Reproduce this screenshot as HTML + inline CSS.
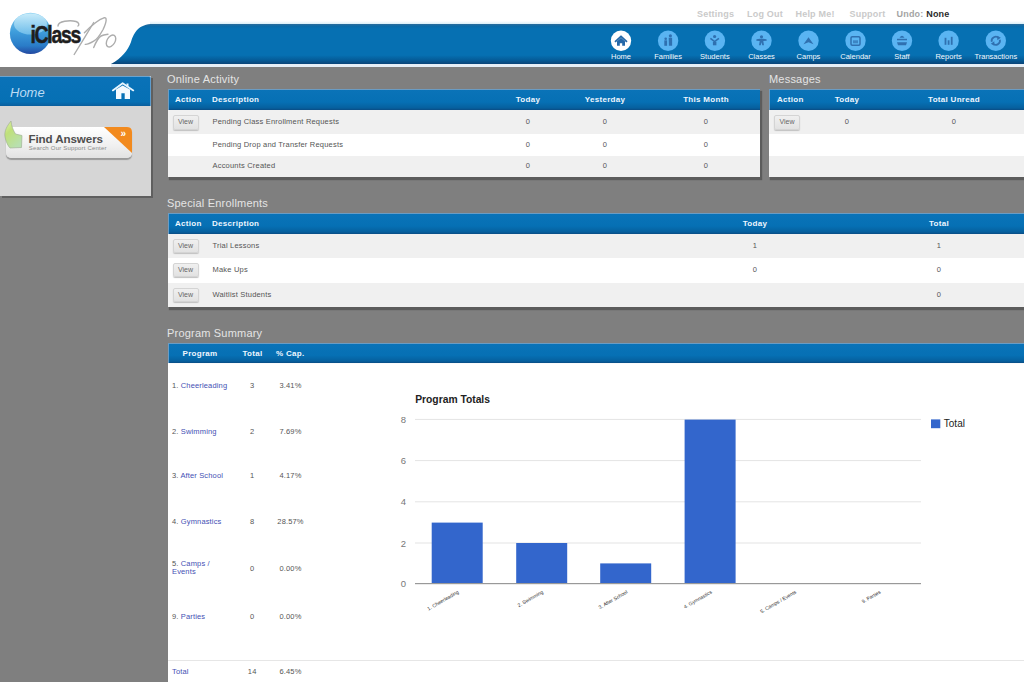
<!DOCTYPE html>
<html><head><meta charset="utf-8">
<style>
*{box-sizing:border-box;margin:0;padding:0}
html,body{width:1024px;height:682px;overflow:hidden}
body{position:relative;background:#7f7f7f;font-family:"Liberation Sans",sans-serif;}
.abs{position:absolute}
#top{left:0;top:0;width:1024px;height:67px;background:#fff}
.toplink{position:absolute;top:8.8px;font-size:9px;color:#cacaca;font-weight:bold;letter-spacing:0.2px}
.navl{position:absolute;top:52px;width:60px;text-align:center;font-size:7.5px;color:#f2f8fd}
.ptitle{position:absolute;font-size:11px;color:#e4e4e4;letter-spacing:0.2px}
.panel{position:absolute;background:#f0f0f0;box-shadow:1.5px 2.5px 1px 0.5px #5c5c5c}
.ph{position:absolute;left:0;right:0;top:0;height:21px;box-shadow:inset 1px 0 0 #6a9cc4,0 1px 0 #fafafa;background:linear-gradient(#0a73b8 0,#0670b4 60%,#06609e 90%,#0a4c84 100%);border-top:1px solid #6a9cc4}
.ph span{position:absolute;top:5px;font-size:8px;font-weight:bold;color:#eef6ff;letter-spacing:0.3px}
.row{position:absolute;left:0;right:0}
.row span{position:absolute;font-size:7.5px;color:#555;letter-spacing:0.2px}
.btn{position:absolute;width:26px;height:14.5px;background:linear-gradient(#f0f0f0,#e2e2e2);border:1px solid #d4d4d4;border-radius:2px;box-shadow:0 1px 1px #c0c0c0;font-size:7px;color:#666;text-align:center;line-height:12px}
.pl{position:absolute;font-size:7.5px;color:#555;letter-spacing:0.15px;white-space:nowrap}
.lk{color:#4450b4}
</style></head>
<body><div id="wrap" style="position:absolute;left:0;top:0;width:1024px;height:682px;overflow:hidden">
<div id="top" class="abs"></div>

<!-- blue nav bar -->
<svg class="abs" style="left:0;top:0" width="1024" height="70">
  <defs>
    <linearGradient id="bar" x1="0" y1="0" x2="0" y2="1">
      <stop offset="0" stop-color="#2a6c9c"/>
      <stop offset="0.06" stop-color="#0a6aa8"/>
      <stop offset="0.12" stop-color="#0670b2"/>
      <stop offset="0.78" stop-color="#0670b2"/>
      <stop offset="0.9" stop-color="#055c98"/>
      <stop offset="1" stop-color="#0a4478"/>
    </linearGradient>
    <linearGradient id="halo" x1="0" y1="0" x2="0" y2="1">
      <stop offset="0" stop-color="#ffffff"/>
      <stop offset="1" stop-color="#d8eef8"/>
    </linearGradient>
  </defs>
  <rect x="150" y="21" width="874" height="3" fill="url(#halo)"/><rect x="111" y="64" width="913" height="3" fill="#e6eef6"/><path d="M111 64 C 122 58, 128 50, 131 42 C 134 32, 139 24, 153 24 L1024 24 L1024 64 Z" fill="url(#bar)"/>
</svg>


<!-- logo -->
<svg class="abs" style="left:0;top:0" width="130" height="64">
  <defs>
    <linearGradient id="orb" x1="0" y1="0" x2="0" y2="1">
      <stop offset="0" stop-color="#8fd2f2"/>
      <stop offset="0.45" stop-color="#3f9edc"/>
      <stop offset="0.8" stop-color="#2a7cc8"/>
      <stop offset="1" stop-color="#2348a0"/>
    </linearGradient>
    <linearGradient id="orbh" x1="0" y1="0" x2="0" y2="1">
      <stop offset="0" stop-color="#d6f2fc"/>
      <stop offset="1" stop-color="#7cc6ee"/>
    </linearGradient>
  </defs>
  <circle cx="30.5" cy="33.4" r="20.6" fill="url(#orb)"/><ellipse cx="30.5" cy="24" rx="16.5" ry="10.5" fill="url(#orbh)" opacity="0.8"/>
  <g fill="none" stroke="#adadad" stroke-width="1.4" stroke-linecap="round">
    <path d="M58 26 C 58 21, 70 20, 76 21.5 C 79 22.5, 79.5 25, 78 26"/>
    <path d="M74.2 54.5 C 80 45, 88 32, 93.7 22.5"/>
    <path d="M84.4 32.7 C 88 29, 97 20, 103.9 17.8 C 107 17, 107 21, 103.1 29.5 C 100 35, 96 40, 93.7 41.2 C 90 43.5, 87 44.5, 85.2 44.4"/>
    <path d="M93.7 47.5 C 96 42, 99 37, 101 36 C 103 35, 106 34.5, 108 34.2"/>
    <ellipse cx="111" cy="41" rx="4" ry="6.5" transform="rotate(30 111 41)"/>
  </g>
  <text x="30.5" y="42.5" font-family="Liberation Sans" font-weight="bold" font-size="24" fill="#1e1e1e" stroke="#1e1e1e" stroke-width="0.5" letter-spacing="-1.6" textLength="49.5" lengthAdjust="spacingAndGlyphs">iClass</text>
</svg>

<!-- top links -->
<div class="toplink" style="left:697px">Settings</div>
<div class="toplink" style="left:747px">Log Out</div>
<div class="toplink" style="left:795.5px">Help Me!</div>
<div class="toplink" style="left:849.5px">Support</div>
<div class="toplink" style="left:896.5px;color:#a4a4a4">Undo: <span style="color:#2a2a2a">None</span></div>

<svg class="abs" style="left:0;top:0" width="1024" height="66">
<g transform="translate(621 40.8)"><circle r="10.2" fill="#ffffff"/><path d="M-6 1 L0 -4.5 L6 1" fill="none" stroke="#2468a8" stroke-width="1.8" stroke-linejoin="round"/><path d="M-4 0.5 L0 -3 L4 0.5 L4 5 L1.2 5 L1.2 2.5 L-1.2 2.5 L-1.2 5 L-4 5 Z" fill="#2468a8"/></g>
<g transform="translate(668.1 40.8)"><circle r="10.2" fill="#5ab4f2"/><circle cx="2.3" cy="-5" r="1.6" fill="#2f70b0"/><path d="M0.6 -3 L4 -3 L4 5 L0.8 5 Z" fill="#2f70b0"/><circle cx="-2.4" cy="-2" r="1.3" fill="#2f70b0"/><path d="M-3.8 -0.5 L-1 -0.5 L-1 5 L-3.8 5 Z" fill="#2f70b0"/></g>
<g transform="translate(714.9 40.8)"><circle r="10.2" fill="#5ab4f2"/><circle cx="-0.3" cy="-4.3" r="1.6" fill="#2f70b0"/><path d="M-4.5 -2.5 L-0.3 0.8 L4 -2.5" fill="none" stroke="#2f70b0" stroke-width="1.6"/><path d="M-2 1 L1.5 1 L1.5 4.5 L-2 4.5 Z" fill="#2f70b0"/></g>
<g transform="translate(761.5 40.8)"><circle r="10.2" fill="#5ab4f2"/><circle cx="0" cy="-4" r="1.6" fill="#2f70b0"/><path d="M-5 -1.5 L-1.5 -2 L1.5 -2 L5 -1.5 L5.2 0 L1.8 0.2 L2.5 4.5 L0.8 4.5 L0 1.5 L-0.8 4.5 L-2.5 4.5 L-1.8 0.2 L-5.2 0 Z" fill="#2f70b0"/></g>
<g transform="translate(808.5 40.8)"><circle r="10.2" fill="#5ab4f2"/><path d="M-5 3.5 L0 -3.5 L5 3.5 L0 1.5 Z" fill="#2f70b0"/></g>
<g transform="translate(855.5 40.8)"><circle r="10.2" fill="#5ab4f2"/><rect x="-4.5" y="-4" width="9" height="8.5" rx="1.2" fill="none" stroke="#2f70b0" stroke-width="1.5"/><rect x="-2.5" y="-0.5" width="5" height="3" fill="#2f70b0" opacity="0.7"/></g>
<g transform="translate(902 40.8)"><circle r="10.2" fill="#5ab4f2"/><path d="M-2.5 -3 Q0 -7 2.5 -3 Z" fill="#2f70b0"/><rect x="-5" y="-2" width="10" height="1.5" fill="#2f70b0"/><path d="M-5 1.5 L5 1.5 L4 4.5 L-4 4.5 Z" fill="#2f70b0"/></g>
<g transform="translate(948.6 40.8)"><circle r="10.2" fill="#5ab4f2"/><rect x="-4" y="-3" width="1.8" height="7" fill="#2f70b0"/><rect x="-0.9" y="-0.5" width="1.8" height="4.5" fill="#2f70b0"/><rect x="2.2" y="-4" width="1.8" height="8" fill="#2f70b0"/></g>
<g transform="translate(995.8 40.8)"><circle r="10.2" fill="#5ab4f2"/><path d="M-4 1 A4 4 0 0 1 3 -2.5" fill="none" stroke="#2f70b0" stroke-width="1.8"/><path d="M4 -1 A4 4 0 0 1 -3 2.5" fill="none" stroke="#2f70b0" stroke-width="1.8"/><path d="M1.5 -5 L5 -3 L1.5 -0.5 Z" fill="#2f70b0"/><path d="M-1.5 5 L-5 3 L-1.5 0.5 Z" fill="#2f70b0"/></g>
</svg>
<div class="navl" style="left:591.0px">Home</div>
<div class="navl" style="left:638.1px">Families</div>
<div class="navl" style="left:684.9px">Students</div>
<div class="navl" style="left:731.5px">Classes</div>
<div class="navl" style="left:778.5px">Camps</div>
<div class="navl" style="left:825.5px">Calendar</div>
<div class="navl" style="left:872.0px">Staff</div>
<div class="navl" style="left:918.6px">Reports</div>
<div class="navl" style="left:965.8px">Transactions</div>
<!-- side panel -->
<div class="abs" style="left:0;top:75.5px;width:151px;height:120px;background:#d6d6d6;box-shadow:2px 2px 0 #5f5f5f"></div>
<div class="abs" style="left:0;top:75.5px;width:151px;height:30.5px;background:linear-gradient(#0a72b8,#0670b4 85%,#0a5f9e);border-top:1px solid #6aa4d0;border-right:1px solid #5e9ccc;border-top-right-radius:2px"></div>
<div class="abs" style="left:10px;top:84.5px;font-size:13px;font-style:italic;color:#bcdcf4">Home</div>
<svg class="abs" style="left:105px;top:76px" width="36" height="28" viewBox="105 76 36 28">
  <path d="M112.8 90.4 L122.65 83.2 L133.3 90.4" fill="none" stroke="#e8f6ff" stroke-width="1.8" stroke-linecap="round" stroke-linejoin="round"/>
  <path d="M126.5 85.5 L126.5 83.5 L128.5 83.5 L128.5 87" fill="#e8f6ff"/>
  <path d="M116 89.5 L122.65 85.6 L130 89.5 L130 99 L124.7 99 L124.7 93.2 L121.4 93.2 L121.4 99 L116 99 Z" fill="#f6fbff"/>
</svg>

<!-- find answers -->
<div class="abs" style="left:5.5px;top:126.5px;width:126.5px;height:31px;border-radius:5px;background:linear-gradient(#ffffff,#f0f0f0 60%,#e2e2e2);box-shadow:0 2px 1px #9a9a9a"></div>
<svg class="abs" style="left:104px;top:126.5px" width="28" height="26" viewBox="0 0 28 26">
  <path d="M0 0 L23 0 Q28 0 28 5 L28 26 Z" fill="#f28a1e"/>
  <text x="16.5" y="10" font-family="Liberation Sans" font-weight="bold" font-size="10" fill="#fff">»</text>
</svg>
<svg class="abs" style="left:0;top:118px" width="26" height="34" viewBox="0 118 26 34">
  <defs><linearGradient id="gr" x1="0" y1="0" x2="0.6" y2="1"><stop offset="0" stop-color="#e4f6a8"/><stop offset="0.4" stop-color="#bfe07a"/><stop offset="1" stop-color="#b8e0b0"/></linearGradient></defs>
  <path d="M11 121 C 7 126, 4 131, 5 137 C 6 142, 8 146, 10 148 L21.5 147.5 L22 135.5 L15.5 134 C 13 130, 11.5 126, 11 121 Z" fill="url(#gr)" stroke="#9aaa90" stroke-width="0.6"/>
</svg>
<div class="abs" style="left:28.5px;top:132px;font-size:11.6px;font-weight:bold;color:#4e4e4e;letter-spacing:-0.1px">Find Answers</div>
<div class="abs" style="left:28.7px;top:145.2px;font-size:6px;color:#8a8a8a;letter-spacing:0.2px">Search Our Support Center</div>

<!-- titles -->
<div class="ptitle" style="left:167px;top:73px">Online Activity</div>
<div class="ptitle" style="left:769px;top:73px">Messages</div>
<div class="ptitle" style="left:167px;top:197px">Special Enrollments</div>
<div class="ptitle" style="left:167px;top:327px">Program Summary</div>
<div class="panel" style="left:167.5px;top:89px;width:592.5px;height:88px"><div class="ph"><span style="left:7.5px">Action</span><span style="left:44.5px">Description</span><span style="left:320.5px;width:80px;text-align:center">Today</span><span style="left:397.5px;width:80px;text-align:center">Yesterday</span><span style="left:498.5px;width:80px;text-align:center">This Month</span></div><div class="row" style="top:21px;height:23.5px;background:#f0f0f0"><div class="btn" style="left:5px;top:5px">View</div><span style="left:45px;top:6.8px">Pending Class Enrollment Requests</span><span style="left:330.5px;width:60px;text-align:center;top:6.8px">0</span><span style="left:407.5px;width:60px;text-align:center;top:6.8px">0</span><span style="left:508.5px;width:60px;text-align:center;top:6.8px">0</span></div><div class="row" style="top:44.5px;height:22.1px;background:#ffffff"><span style="left:45px;top:6.1px">Pending Drop and Transfer Requests</span><span style="left:330.5px;width:60px;text-align:center;top:6.1px">0</span><span style="left:407.5px;width:60px;text-align:center;top:6.1px">0</span><span style="left:508.5px;width:60px;text-align:center;top:6.1px">0</span></div><div class="row" style="top:66.6px;height:21.4px;background:#f0f0f0"><span style="left:45px;top:5.7px">Accounts Created</span><span style="left:330.5px;width:60px;text-align:center;top:5.7px">0</span><span style="left:407.5px;width:60px;text-align:center;top:5.7px">0</span><span style="left:508.5px;width:60px;text-align:center;top:5.7px">0</span></div></div><div class="panel" style="left:769px;top:89px;width:256px;height:88px"><div class="ph"><span style="left:8px">Action</span><span style="left:38px;width:80px;text-align:center">Today</span><span style="left:145px;width:80px;text-align:center">Total Unread</span></div><div class="row" style="top:21px;height:23.5px;background:#f0f0f0"><div class="btn" style="left:5px;top:5px">View</div><span style="left:48px;width:60px;text-align:center;top:6.8px">0</span><span style="left:155px;width:60px;text-align:center;top:6.8px">0</span></div><div class="row" style="top:44.5px;height:22.1px;background:#ffffff"></div><div class="row" style="top:66.6px;height:21.4px;background:#f0f0f0"></div></div><div class="panel" style="left:167.5px;top:213.4px;width:857px;height:93.3px"><div class="ph" style="height:20.6px"><span style="left:7.5px">Action</span><span style="left:44.5px">Description</span><span style="left:547.5px;width:80px;text-align:center">Today</span><span style="left:731.5px;width:80px;text-align:center">Total</span></div><div class="row" style="top:20.6px;height:24px;background:#f0f0f0"><div class="btn" style="left:5px;top:5px">View</div><span style="left:45px;top:7.0px">Trial Lessons</span><span style="left:557.5px;width:60px;text-align:center;top:7.0px">1</span><span style="left:741.5px;width:60px;text-align:center;top:7.0px">1</span></div><div class="row" style="top:44.6px;height:24.6px;background:#ffffff"><div class="btn" style="left:5px;top:5px">View</div><span style="left:45px;top:7.3px">Make Ups</span><span style="left:557.5px;width:60px;text-align:center;top:7.3px">0</span><span style="left:741.5px;width:60px;text-align:center;top:7.3px">0</span></div><div class="row" style="top:69.2px;height:24.1px;background:#f0f0f0"><div class="btn" style="left:5px;top:5px">View</div><span style="left:45px;top:7.1px">Waitlist Students</span><span style="left:741.5px;width:60px;text-align:center;top:7.1px">0</span></div></div><div class="panel" style="left:167.5px;top:343px;width:857px;height:345px;background:#fff"><div class="ph" style="height:20.2px"><span style="left:15px">Program</span><span style="left:75px">Total</span><span style="left:108.5px">% Cap.</span></div></div>
<!-- program list -->
<div class="abs plist" style="left:0;top:0">
<div class="pl" style="left:172px;top:381.4px">1. <span class="lk">Cheerleading</span></div><div class="pl" style="left:232.2px;width:40px;text-align:center;top:381.4px">3</div><div class="pl" style="left:265.5px;width:50px;text-align:center;top:381.4px">3.41%</div><div class="pl" style="left:172px;top:427.0px">2. <span class="lk">Swimming</span></div><div class="pl" style="left:232.2px;width:40px;text-align:center;top:427.0px">2</div><div class="pl" style="left:265.5px;width:50px;text-align:center;top:427.0px">7.69%</div><div class="pl" style="left:172px;top:471.4px">3. <span class="lk">After School</span></div><div class="pl" style="left:232.2px;width:40px;text-align:center;top:471.4px">1</div><div class="pl" style="left:265.5px;width:50px;text-align:center;top:471.4px">4.17%</div><div class="pl" style="left:172px;top:517.0px">4. <span class="lk">Gymnastics</span></div><div class="pl" style="left:232.2px;width:40px;text-align:center;top:517.0px">8</div><div class="pl" style="left:265.5px;width:50px;text-align:center;top:517.0px">28.57%</div><div class="pl" style="left:172px;top:559.8px;line-height:8.2px">5. <span class="lk">Camps /</span><br><span class="lk">Events</span></div><div class="pl" style="left:232.2px;width:40px;text-align:center;top:564.0px">0</div><div class="pl" style="left:265.5px;width:50px;text-align:center;top:564.0px">0.00%</div><div class="pl" style="left:172px;top:611.6px">9. <span class="lk">Parties</span></div><div class="pl" style="left:232.2px;width:40px;text-align:center;top:611.6px">0</div><div class="pl" style="left:265.5px;width:50px;text-align:center;top:611.6px">0.00%</div><div class="abs" style="left:168px;top:659.5px;width:856px;height:1px;background:#e6e6e6"></div><div class="pl" style="left:172px;top:667.0px"><span class="lk">Total</span></div><div class="pl" style="left:232.2px;width:40px;text-align:center;top:667.0px">14</div><div class="pl" style="left:265.5px;width:50px;text-align:center;top:667.0px">6.45%</div></div><svg class="abs" style="left:0;top:0" width="1024" height="682"><text x="415.2" y="402.5" font-family="Liberation Sans" font-weight="bold" font-size="10.3" fill="#222">Program Totals</text><rect x="415" y="418.9" width="506" height="1" fill="#e4e4e4"/><text x="406" y="422.9" text-anchor="end" font-family="Liberation Sans" font-size="9.5" fill="#777">8</text><rect x="415" y="460.1" width="506" height="1" fill="#e4e4e4"/><text x="406" y="464.1" text-anchor="end" font-family="Liberation Sans" font-size="9.5" fill="#777">6</text><rect x="415" y="501.3" width="506" height="1" fill="#e4e4e4"/><text x="406" y="505.3" text-anchor="end" font-family="Liberation Sans" font-size="9.5" fill="#777">4</text><rect x="415" y="542.5" width="506" height="1" fill="#e4e4e4"/><text x="406" y="546.5" text-anchor="end" font-family="Liberation Sans" font-size="9.5" fill="#777">2</text><text x="406" y="587" text-anchor="end" font-family="Liberation Sans" font-size="9.5" fill="#777">0</text><rect x="431.7" y="522.6" width="51" height="60.89999999999998" fill="#3366cc"/><rect x="516.2" y="543" width="51" height="40.5" fill="#3366cc"/><rect x="600.2" y="563.4" width="51" height="20.100000000000023" fill="#3366cc"/><rect x="684.6" y="419.6" width="51" height="163.89999999999998" fill="#3366cc"/><rect x="415" y="583" width="506" height="1.2" fill="#999"/><text x="459.2" y="593" text-anchor="end" transform="rotate(-30 459.2 593)" font-family="Liberation Sans" font-size="5" fill="#333">1. Cheerleading</text><text x="543.6" y="593" text-anchor="end" transform="rotate(-30 543.6 593)" font-family="Liberation Sans" font-size="5" fill="#333">2. Swimming</text><text x="628.0" y="593" text-anchor="end" transform="rotate(-30 628.0 593)" font-family="Liberation Sans" font-size="5" fill="#333">3. After School</text><text x="712.4" y="593" text-anchor="end" transform="rotate(-30 712.4 593)" font-family="Liberation Sans" font-size="5" fill="#333">4. Gymnastics</text><text x="796.8" y="593" text-anchor="end" transform="rotate(-30 796.8 593)" font-family="Liberation Sans" font-size="5" fill="#333">5. Camps / Events</text><text x="881.2" y="593" text-anchor="end" transform="rotate(-30 881.2 593)" font-family="Liberation Sans" font-size="5" fill="#333">9. Parties</text><rect x="931" y="419.4" width="9.3" height="8.8" fill="#3366cc"/><text x="943.8" y="427.3" font-family="Liberation Sans" font-size="10" fill="#222">Total</text></svg></div></body></html>
